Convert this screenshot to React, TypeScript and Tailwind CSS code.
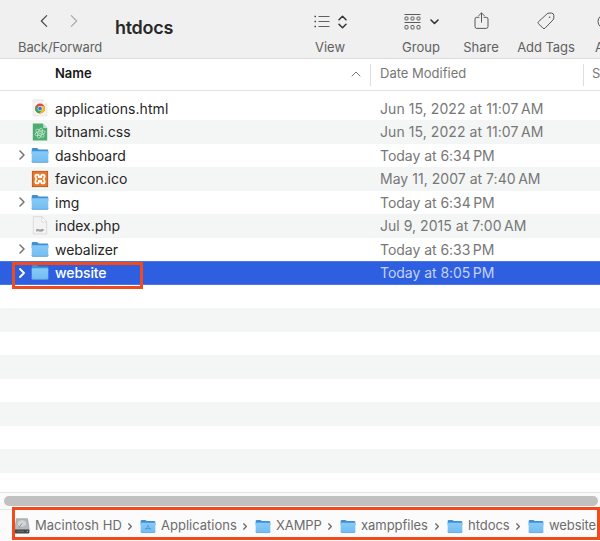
import type { ReactNode } from "react";

function Folder({ className, app = false, id }: { className: string; app?: boolean; id: string }) {
  return (
    <svg viewBox="0 0 18 17" className={className}>
      <defs>
        <linearGradient id={id} x1="0" y1="0" x2="0" y2="1">
          <stop offset="0" stopColor="#86caf8" />
          <stop offset="1" stopColor="#74bdf1" />
        </linearGradient>
      </defs>
      <path d="M.7 2.4Q.7 1.1 2 1.1h3.8q.7 0 1.2.6l.7.7h8.3q1.300 0 1.300 1.300V7H.7Z" fill="#3f8fd3" />
      <path d="M.7 5q0-.8.8-.8h15q.8 0 .8.8v9.300q0 1.200-1.200 1.200H1.900Q.7 15.500.7 14.300Z" fill={`url(#${id})`} />
      <path d="M.8 14.300q.1 1.100 1.200 1.100h14q1.100 0 1.200-1.100" fill="none" stroke="#519bcf" strokeWidth=".7" />
      {app && <path d="m6.300 12.300 3-5.300M8.700 7l3 5.300M5.800 10.800h6.400" stroke="#4896d2" strokeWidth=".9" fill="none" />}
    </svg>
  );
}

function ChromeFile() {
  return (
    <svg viewBox="0 0 18 18" className="h-[18px] w-[18px]">
      <path d="M2 .8h9.800L16 5v12H2Z" fill="#f3f3f3" stroke="#d8d8d8" strokeWidth=".5" />
      <path d="M11.800.8V5H16" fill="#fff" stroke="#ddd" strokeWidth=".5" />
      <circle cx="9" cy="9.500" r="4.900" fill="#e5483b" />
      <path d="M9 9.500 4.800 7A4.900 4.900 0 0 0 8.500 14.350L11 10.700Z" fill="#35a853" />
      <path d="m9 9.500 2 1.200-2.500 3.650A4.900 4.900 0 0 0 13.200 7H9Z" fill="#fbbc09" />
      <circle cx="9" cy="9.500" r="2.400" fill="#fff" />
      <circle cx="9" cy="9.500" r="1.900" fill="#3977e8" />
    </svg>
  );
}

function CssFile() {
  return (
    <svg viewBox="0 0 18 18" className="h-[18px] w-[18px]">
      <path d="M1.800.5h10.100l4.300 4.500v12.500H1.800Z" fill="#4fac72" />
      <path d="M11.900.5 12.400 5h4Z" fill="#b9e5c6" />
      <g fill="none" stroke="#c7ead1" strokeWidth=".75">
        <ellipse cx="9" cy="10.200" rx="5.200" ry="2" transform="rotate(-15 9 10.200)" />
        <ellipse cx="9" cy="10.200" rx="5.200" ry="2" transform="rotate(45 9 10.200)" />
        <ellipse cx="9" cy="10.200" rx="5.200" ry="2" transform="rotate(105 9 10.200)" />
      </g>
      <circle cx="9" cy="10.200" r=".7" fill="#e4f7e9" />
    </svg>
  );
}

function XamppFile() {
  return (
    <svg viewBox="0 0 18 18" className="h-[18px] w-[18px]">
      <rect x="1.300" y="1.300" width="15.400" height="15.400" fill="#ec7422" stroke="#a8501a" strokeWidth=".8" />
      <g fill="none" stroke="#fff" strokeWidth="1.900" strokeLinejoin="round">
        <path d="M4.400 6.300q0-1.700 1.700-1.700t1.700 1.700v1h2.400v-1q0-1.700 1.700-1.700t1.700 1.700q0 1.900-1.300 2.700 1.300.8 1.300 2.700 0 1.700-1.700 1.700t-1.700-1.700v-1H7.800v1q0 1.700-1.700 1.700t-1.700-1.700Q4.400 9.800 5.700 9 4.400 8.200 4.400 6.300Z" />
      </g>
      <path d="M6.700 9h4.600" stroke="#ec7422" strokeWidth="1.200" strokeLinecap="round" />
    </svg>
  );
}

function PhpFile() {
  return (
    <svg viewBox="0 0 18 19" className="h-[19px] w-[18px]">
      <path d="M2.300.7H11l4.700 5.300v12H2.300Z" fill="#f3f3f3" stroke="#cdcdcd" strokeWidth=".6" />
      <path d="M11 .7V6h4.700Z" fill="#fff" stroke="#cfcfcf" strokeWidth=".6" />
      <text x="9" y="15.700" textAnchor="middle" fontSize="3.700" fontWeight="700" fill="#777" fontFamily="Inter, sans-serif">PHP</text>
    </svg>
  );
}

function Disk() {
  return (
    <svg viewBox="0 0 16 16" className="h-[16px] w-[16px] shrink-0">
      <path d="M2.500.7h11l1.700 10.800H.8Z" fill="#b4babd" stroke="#8b9295" strokeWidth=".6" />
      <ellipse cx="8" cy="5.500" rx="4.700" ry="3.700" fill="#d1d5d6" stroke="#a2a8aa" strokeWidth=".5" />
      <path d="m8 5.500-3 4" stroke="#8a8e90" strokeWidth=".9" />
      <rect x=".6" y="11.500" width="14.800" height="3.900" rx=".8" fill="#454849" />
      <path d="M3 13.400h7" stroke="#696d6e" />
      <circle cx="13.300" cy="13.400" r=".6" fill="#8bdc8b" />
    </svg>
  );
}

function Chevron({ className, width = 1.8 }: { className: string; width?: number }) {
  return (
    <svg viewBox="0 0 6 10" className={className} fill="none" stroke="currentColor" strokeWidth={width} strokeLinecap="round" strokeLinejoin="round">
      <path d="m1 1 4 4-4 4" />
    </svg>
  );
}

type Row = { name: string; date: string; icon: ReactNode; folder?: boolean; nameClass: string; dateClass: string };

const folderClass = "h-[17px] w-[18px]";
const rows: Row[] = [
  { name: "applications.html", date: "Jun 15, 2022 at 11:07\u2009AM", icon: <ChromeFile />, nameClass: "tracking-[0.06px]", dateClass: "tracking-[0.07px]" },
  { name: "bitnami.css", date: "Jun 15, 2022 at 11:07\u2009AM", icon: <CssFile />, nameClass: "tracking-[0.05px]", dateClass: "tracking-[0.07px]" },
  { name: "dashboard", date: "Today at 6:34\u2009PM", icon: <Folder id="f1" className={folderClass} />, folder: true, nameClass: "tracking-[0.02px]", dateClass: "tracking-[-0.04px]" },
  { name: "favicon.ico", date: "May 11, 2007 at 7:40\u2009AM", icon: <XamppFile />, nameClass: "tracking-[0px]", dateClass: "tracking-[0.03px]" },
  { name: "img", date: "Today at 6:34\u2009PM", icon: <Folder id="f2" className={folderClass} />, folder: true, nameClass: "tracking-[0.05px]", dateClass: "tracking-[-0.04px]" },
  { name: "index.php", date: "Jul 9, 2015 at 7:00\u2009AM", icon: <PhpFile />, nameClass: "tracking-[0px]", dateClass: "tracking-[0.03px]" },
  { name: "webalizer", date: "Today at 6:33\u2009PM", icon: <Folder id="f3" className={folderClass} />, folder: true, nameClass: "tracking-[-0.07px]", dateClass: "tracking-[-0.04px]" },
  { name: "website", date: "Today at 8:05\u2009PM", icon: <Folder id="f4" className={folderClass} />, folder: true, nameClass: "tracking-[-0.1px]", dateClass: "tracking-[-0.04px]" },
];

function Toolbar() {
  return (
    <header className="flex h-[59px] shrink-0 border-b border-[#dcdcdc] bg-[#f0f0f0] text-[13px] text-[#616161]">
      <div className="flex w-[115px] flex-col pl-[18px]">
        <div className="flex h-[38px] gap-[22px] pt-[14px] pl-[22px]">
          <Chevron className="h-[14px] w-[8px] rotate-180 text-[#484848]" width={0.9} />
          <Chevron className="h-[14px] w-[8px] text-[#ababab]" width={0.9} />
        </div>
        <span className="leading-[18px] tracking-[-0.12px]">Back/Forward</span>
      </div>
      <h1 className="w-[185px] pt-[16px] text-[18px] leading-[24px] font-semibold tracking-[-0.3px] text-[#292929]">htdocs</h1>
      <div className="flex w-[60px] flex-col items-center">
        <div className="flex h-[38px] items-center gap-[8px] pt-[5px]">
          <svg width="16" height="14" viewBox="0 0 16 14" fill="none" stroke="#606060">
            <path d="M4.500 1.500h11M4.500 6.500h11M4.500 11.500h11" />
            <path d="M.5 1.500h1.500M.5 6.500h1.500M.5 11.500h1.500" strokeWidth="1.500" stroke="#444" />
          </svg>
          <svg width="9" height="14" viewBox="0 0 9 14" fill="none" stroke="#333" strokeWidth="1.500" strokeLinecap="round" strokeLinejoin="round"><path d="m1 4.700 3.500-3.500L8 4.700M1 9.300l3.500 3.500L8 9.300" /></svg>
        </div>
        <span className="leading-[18px]">View</span>
      </div>
      <div className="flex w-[122px] flex-col items-center">
        <div className="flex h-[38px] items-center gap-[9px] pt-[4px]">
          <svg width="17" height="17" viewBox="0 0 17 17" fill="none" stroke="#5c5c5c">
            <path d="M.5 1.500h16M.5 9.500h16" />
            <g><rect x="1" y="4" width="3" height="3" rx=".8" /><rect x="7" y="4" width="3" height="3" rx=".8" /><rect x="13" y="4" width="3" height="3" rx=".8" /><rect x="1" y="12.500" width="3" height="3.500" rx=".8" /><rect x="7" y="12.500" width="3" height="3.500" rx=".8" /><rect x="13" y="12.500" width="3" height="3.500" rx=".8" /></g>
          </svg>
          <svg className="mt-[2px]" width="9" height="6" viewBox="0 0 9 6" fill="none" stroke="#333" strokeWidth="1.600" strokeLinecap="round" strokeLinejoin="round"><path d="m1 1 3.500 3.500L8 1" /></svg>
        </div>
        <span className="leading-[18px]">Group</span>
      </div>
      <div className="-ml-[21px] flex w-[40px] flex-col items-center">
        <div className="flex h-[38px] pt-[12px]">
          <svg width="15" height="18" viewBox="0 0 15 18" fill="none" stroke="#575757" strokeLinecap="round" strokeLinejoin="round"><path d="M5 5.300H2.800Q1 5.300 1 7.100v7.500q0 1.800 1.800 1.800h9.400q1.800 0 1.800-1.800V7.100q0-1.800-1.800-1.800H10M7.500 10.200V1M4.800 3.600l2.700-2.700 2.700 2.700" /></svg>
        </div>
        <span className="leading-[18px]">Share</span>
      </div>
      <div className="flex w-[90px] flex-col items-center">
        <div className="flex h-[38px] pt-[12px]">
          <svg width="18" height="18" viewBox="0 0 18 18" fill="none" stroke="#575757" strokeLinejoin="round"><path d="M9.900 2q.9-.9 2.200-.9h2.400q2.300 0 2.300 2.300v2.400q0 1.300-.9 2.200L8 16.200q-1 1-2 0l-4.500-4.500q-1-1 0-2Z" /><circle cx="12.600" cy="5.200" r=".8" fill="#575757" stroke="none" /></svg>
        </div>
        <span className="leading-[18px] tracking-[-0.05px]">Add Tags</span>
      </div>
      <div className="flex min-w-0 flex-1 flex-col overflow-hidden pl-[4px]">
        <div className="flex h-[38px] pt-[14px] pl-[2px]"><svg className="shrink-0" width="16" height="16" viewBox="0 0 16 16" fill="none" stroke="#575757"><circle cx="8" cy="7.500" r="7" /></svg></div>
        <span className="leading-[18px] whitespace-nowrap">Action</span>
      </div>
    </header>
  );
}

const crumbs = [
  { name: "Macintosh HD", width: "w-[126px]", tracking: "tracking-[0.03px]" },
  { name: "Applications", width: "w-[115px]", tracking: "tracking-[0px]" },
  { name: "XAMPP", width: "w-[85px]", tracking: "tracking-[-0.1px]" },
  { name: "xamppfiles", width: "w-[107px]", tracking: "tracking-[-0.04px]" },
  { name: "htdocs", width: "w-[81px]", tracking: "tracking-[-0.04px]" },
  { name: "website", width: "w-[75px]", tracking: "tracking-[-0.1px]" },
];

export default function App() {
  return (
    <div className="relative flex h-[541px] w-[600px] flex-col overflow-hidden bg-white font-['Inter','Liberation_Sans',sans-serif]">
      <Toolbar />
      <div className="flex h-[32px] shrink-0 items-center border-b border-[#e2e2e2] text-[13px] text-[#777]">
        <div className="flex w-[370px] items-center justify-between pr-[9px] pb-px pl-[55px]">
          <span className="font-semibold text-[#171717]">Name</span>
          <svg width="10" height="6" viewBox="0 0 10 6" fill="none" stroke="#777" strokeLinecap="round"><path d="m1 5 4-4 4 4" /></svg>
        </div>
        <div className="flex h-[22px] w-[213px] items-center border-l border-[#dedede] pb-px pl-[9px]"><span>Date Modified</span></div>
        <div className="flex h-[22px] min-w-0 flex-1 items-center overflow-hidden border-l border-[#dedede] pb-px pl-[8px]">Size</div>
      </div>
      <main className="h-[401px] shrink-0 overflow-hidden pt-[5.500px]">
        {rows.map((row, i) => {
          const selected = i === 7;
          return (
            <div key={row.name} className={selected ? "flex h-[23.500px] items-center border-y border-[#4c74e7] bg-[#2d5fe0] text-[14px] text-white" : i % 2 ? "flex h-[23.500px] items-center bg-[#f4f5f5] text-[14px] text-[#262626]" : "flex h-[23.500px] items-center text-[14px] text-[#262626]"}>
              <div className="flex w-[31px] pl-[19px]">
                {row.folder && <Chevron className={selected ? "h-[10px] w-[6px] text-white" : "h-[10px] w-[6px] text-[#737373]"} width={selected ? 1.8 : 1.5} />}
              </div>
              <div className="flex w-[24px]">{row.icon}</div>
              <div className={`w-[325px] ${selected ? "font-medium" : ""} ${row.nameClass}`}>{row.name}</div>
              <div className={`whitespace-nowrap ${selected ? "text-[#c6d3f8]" : "text-[#777]"} ${row.dateClass}`}>{row.date}</div>
            </div>
          );
        })}
        {Array.from({ length: 8 }, (_, i) => <div key={i} className={i % 2 ? "h-[23.500px] bg-[#f4f5f5]" : "h-[23.500px]"} />)}
      </main>
      <div className="flex h-[18px] shrink-0 items-center border-y border-[#e4e4e4] bg-[#fafafa] pr-[2px] pl-[4px]">
        <div className="h-[10px] w-full rounded-full bg-[#c1c1c1]" />
      </div>
      <footer className="flex h-[31px] shrink-0 items-center bg-[#fbfbfb] pt-px pl-[14px] text-[13px] text-[#6c6c6c]">
        {crumbs.map((crumb, i) => (
          <div key={crumb.name} className={`flex shrink-0 items-center ${crumb.width}`}>
            {i === 0 ? <Disk /> : <Folder id={`c${i}`} app={i === 1} className="h-[15px] w-[16px] shrink-0" />}
            <span className={`ml-[5px] whitespace-nowrap ${crumb.tracking}`}>{crumb.name}</span>
            {i < 5 && <Chevron className="mr-[8px] ml-auto h-[7px] w-[4px] shrink-0" width={2} />}
          </div>
        ))}
      </footer>
      <div className="pointer-events-none absolute top-[262px] left-[12px] h-[27px] w-[131px] border-[3px] border-[#f14a1c]" />
      <div className="pointer-events-none absolute top-[507px] left-[12px] h-[33px] w-[588px] border-[3px] border-[#f14a1c]" />
    </div>
  );
}
